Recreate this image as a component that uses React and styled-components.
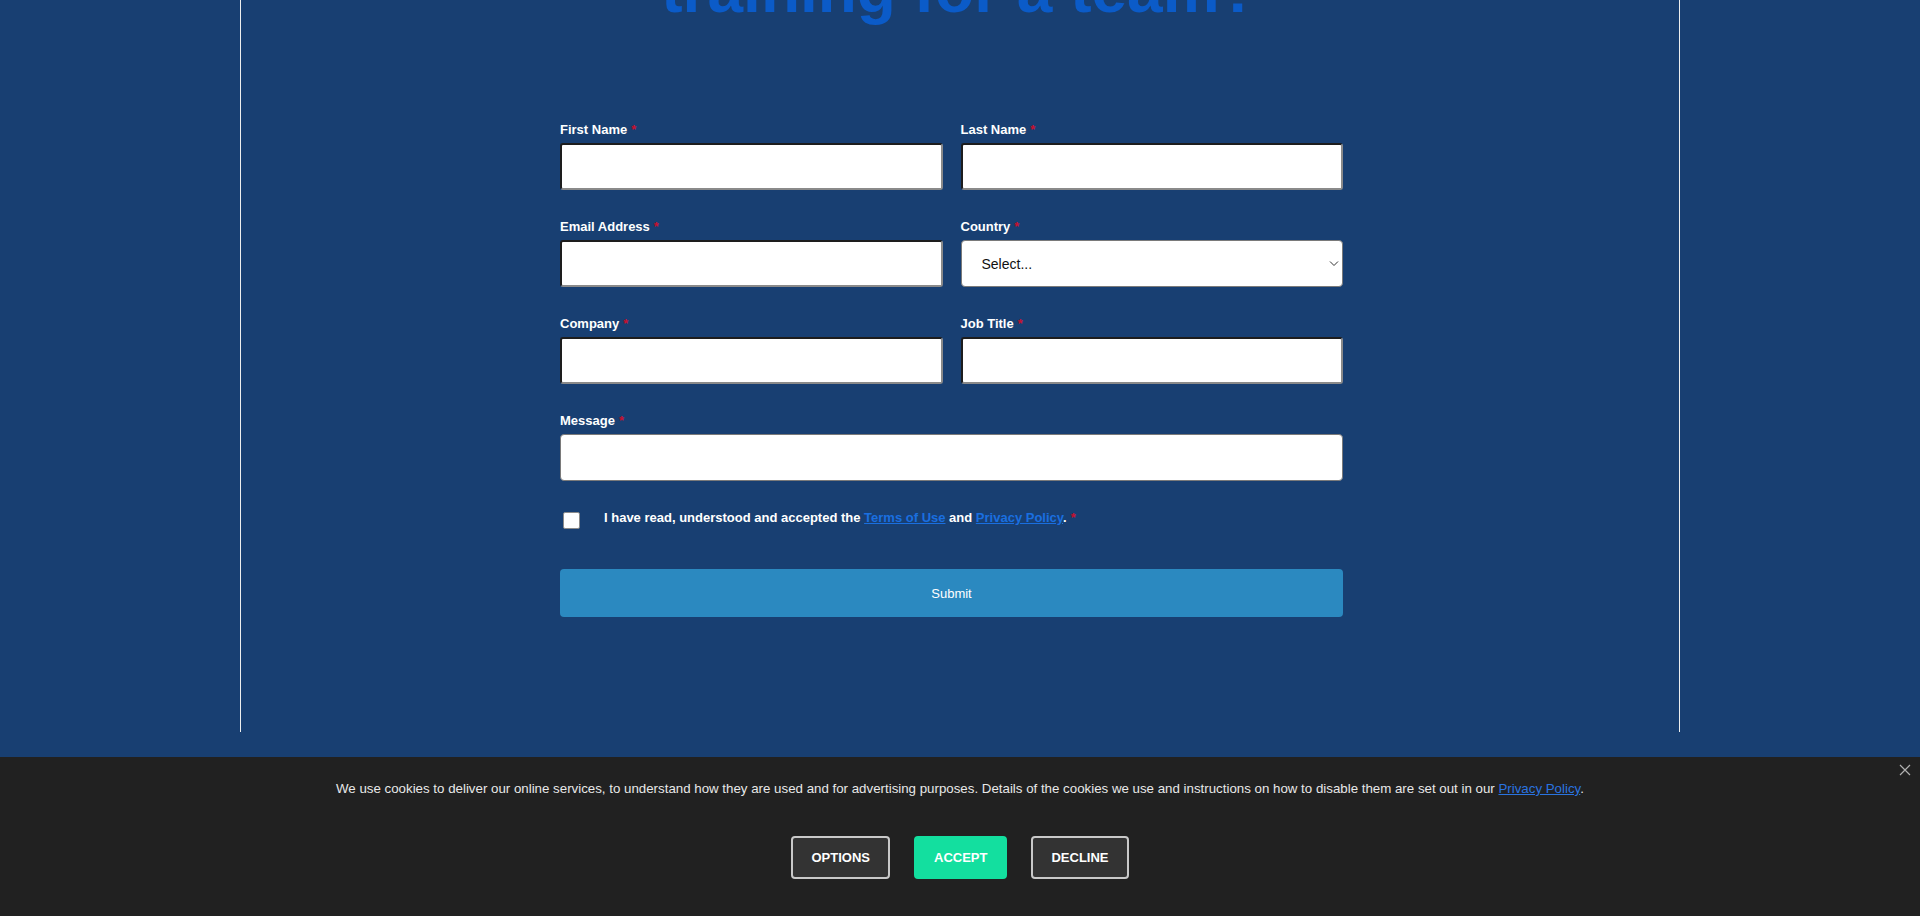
import React from "react";
import styled, { createGlobalStyle, css } from "styled-components";

const GlobalStyle = createGlobalStyle`
  html, body {
    margin: 0;
    padding: 0;
    background: #183f72;
    font-family: "Liberation Sans", Arial, Helvetica, sans-serif;
    overflow: hidden;
  }
  * {
    box-sizing: border-box;
  }
`;

const Page = styled.div`
  height: 916px;
  overflow: hidden;
`;

const Container = styled.div`
  width: 1440px;
  margin: 0 auto;
  border-left: 1px solid #eeeeee;
  border-right: 1px solid #eeeeee;
  padding-bottom: 115px;
`;

const Heading = styled.h2`
  margin: -42px 0 0;
  font-size: 64px;
  line-height: 64px;
  font-weight: 700;
  color: #0b5bc8;
  text-align: center;
`;

const Form = styled.form`
  width: 783px;
  margin-left: 319px;
  padding-top: 100px;
`;

const Grid = styled.div`
  display: grid;
  grid-template-columns: 1fr 1fr;
  column-gap: 18px;
  row-gap: 29px;
`;

const Field = styled.div`
  display: flex;
  flex-direction: column;
  ${(props) =>
    props.wide &&
    css`
      grid-column: 1 / span 2;
    `}
`;

const Label = styled.label`
  font-size: 13px;
  line-height: 16px;
  font-weight: 700;
  color: #ffffff;
  margin-bottom: 5px;
`;

const Required = styled.span`
  color: #c8102e;
  margin-left: 4px;
`;

const Input = styled.input`
  height: 47px;
  width: 100%;
  background: #ffffff;
  border-radius: 3px;
  font-size: 14px;
  padding: 0 16px;
  border: 2px solid;
  border-color: #1d1d1d #8a8a8a #8a8a8a #1d1d1d;
  outline: none;
`;

const Box = styled.textarea`
  height: 47px;
  width: 100%;
  resize: none;
  background: #ffffff;
  border: 1px solid #7a7a7a;
  border-radius: 4px;
  outline: none;
  font-family: inherit;
  font-size: 14px;
  padding: 12px 16px;
`;

const SelectWrap = styled.div`
  position: relative;
`;

const Select = styled.select`
  appearance: none;
  -webkit-appearance: none;
  display: block;
  width: 100%;
  height: 47px;
  background: #ffffff;
  border: 1px solid #7a7a7a;
  border-radius: 4px;
  font-family: inherit;
  font-size: 14px;
  color: #111111;
  padding: 0 20px;
  outline: none;
`;

const Chevron = styled.svg`
  position: absolute;
  right: 4px;
  top: 20px;
  pointer-events: none;
`;

const ConsentRow = styled.div`
  display: flex;
  align-items: flex-start;
  margin-top: 29px;
  padding-left: 3px;
`;

const Check = styled.span`
  width: 17px;
  height: 17px;
  margin-top: 2px;
  margin-right: 24px;
  background: #ffffff;
  border: 1px solid #8a8a8a;
  border-radius: 2px;
  flex-shrink: 0;
`;

const ConsentText = styled.span`
  font-size: 13px;
  line-height: 16px;
  font-weight: 700;
  color: #ffffff;
`;

const Link = styled.a`
  color: ${(props) => props.color || "#1a6fe0"};
  text-decoration: underline;
  cursor: pointer;
`;

const Submit = styled.button`
  display: block;
  width: 100%;
  height: 48px;
  margin-top: 40px;
  background: #2b89c0;
  color: #ffffff;
  border: none;
  border-radius: 4px;
  font-family: inherit;
  font-size: 13px;
`;

const Banner = styled.div`
  position: fixed;
  left: 0;
  right: 0;
  bottom: 0;
  height: 159px;
  background: #212121;
  padding-top: 22px;
  display: flex;
  flex-direction: column;
  align-items: center;
`;

const BannerText = styled.p`
  margin: 0;
  font-size: 13.3px;
  line-height: 20px;
  color: #e8e8e8;
  text-align: center;
`;

const Buttons = styled.div`
  display: flex;
  gap: 24px;
  margin-top: 37px;
`;

const CookieButton = styled.button`
  height: 43px;
  padding: 0 18px;
  border-radius: 4px;
  border: 2px solid #c9c9c9;
  background: #333333;
  color: #ffffff;
  font-family: inherit;
  font-size: 13px;
  font-weight: 700;
  text-transform: uppercase;
  ${(props) =>
    props.primary &&
    css`
      background: #13df9f;
      border-color: #13df9f;
    `}
`;

const Close = styled.button`
  position: absolute;
  top: 7px;
  right: 9px;
  background: none;
  border: none;
  padding: 0;
  line-height: 0;
`;

export default function App() {
  return (
    <Page>
      <GlobalStyle />
      <Container>
        <Heading>training for a team?</Heading>
        <Form onSubmit={(e) => e.preventDefault()}>
          <Grid>
            <Field>
              <Label>
                First Name<Required>*</Required>
              </Label>
              <Input type="text" />
            </Field>
            <Field>
              <Label>
                Last Name<Required>*</Required>
              </Label>
              <Input type="text" />
            </Field>
            <Field>
              <Label>
                Email Address<Required>*</Required>
              </Label>
              <Input type="email" />
            </Field>
            <Field>
              <Label>
                Country<Required>*</Required>
              </Label>
              <SelectWrap>
                <Select defaultValue="">
                  <option value="">Select...</option>
                </Select>
                <Chevron width="10" height="7" viewBox="0 0 10 7">
                  <path d="M1 1.5 L5 5.5 L9 1.5" fill="none" stroke="#333" strokeWidth="1" />
                </Chevron>
              </SelectWrap>
            </Field>
            <Field>
              <Label>
                Company<Required>*</Required>
              </Label>
              <Input type="text" />
            </Field>
            <Field>
              <Label>
                Job Title<Required>*</Required>
              </Label>
              <Input type="text" />
            </Field>
            <Field wide>
              <Label>
                Message<Required>*</Required>
              </Label>
              <Box />
            </Field>
          </Grid>
          <ConsentRow>
            <Check />
            <ConsentText>
              I have read, understood and accepted the <Link>Terms of Use</Link> and{" "}
              <Link>Privacy Policy</Link>.<Required>*</Required>
            </ConsentText>
          </ConsentRow>
          <Submit type="submit">Submit</Submit>
        </Form>
      </Container>
      <Banner>
        <BannerText>
          We use cookies to deliver our online services, to understand how they are used and for
          advertising purposes. Details of the cookies we use and instructions on how to disable them
          are set out in our <Link color="#2a74e0">Privacy Policy</Link>.
        </BannerText>
        <Buttons>
          <CookieButton>Options</CookieButton>
          <CookieButton primary>Accept</CookieButton>
          <CookieButton>Decline</CookieButton>
        </Buttons>
        <Close aria-label="Close">
          <svg width="12" height="12" viewBox="0 0 12 12">
            <path d="M1 1 L11 11 M11 1 L1 11" stroke="#b0b0b0" strokeWidth="1.2" />
          </svg>
        </Close>
      </Banner>
    </Page>
  );
}
